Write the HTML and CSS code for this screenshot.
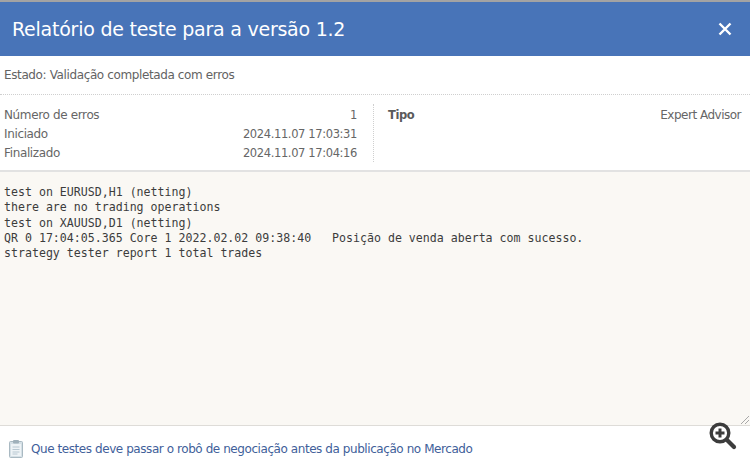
FILE: index.html
```html
<!DOCTYPE html>
<html lang="pt">
<head>
<meta charset="utf-8">
<title>Relatório de teste</title>
<link rel="stylesheet" href="styles.css">
</head>
<body>
<div class="dialog">
  <header class="head">
    <h1 class="title">Relatório de teste para a versão 1.2</h1>
    <svg class="close" width="14" height="14" viewBox="0 0 14 14" aria-hidden="true"><path d="M1.5 1.5 12.5 12.5M12.5 1.5 1.5 12.5" stroke="#fff" stroke-width="2.4" fill="none"/></svg>
  </header>
  <div class="status">Estado: Validação completada com erros</div>
  <div class="info">
    <div class="col col-left">
      <div class="row"><span>Número de erros</span><span class="val">1</span></div>
      <div class="row"><span>Iniciado</span><span class="val">2024.11.07 17:03:31</span></div>
      <div class="row"><span>Finalizado</span><span class="val">2024.11.07 17:04:16</span></div>
    </div>
    <div class="col col-right">
      <div class="row"><b class="strong">Tipo</b><span class="type">Expert Advisor</span></div>
    </div>
  </div>
  <div class="log-wrap">
    <pre class="log">test on EURUSD,H1 (netting)
there are no trading operations
test on XAUUSD,D1 (netting)
QR 0 17:04:05.365 Core 1 2022.02.02 09:38:40   Posição de venda aberta com sucesso.
strategy tester report 1 total trades</pre>
    <svg class="grip" width="10" height="10" viewBox="0 0 10 10" aria-hidden="true"><path d="M1 9 9 1M5 9 9 5" stroke="#a8a8a8" stroke-width="1" fill="none"/></svg>
  </div>
  <footer class="foot">
    <svg class="clip" width="16" height="19" viewBox="0 0 16 19" aria-hidden="true">
      <rect x="1.5" y="2.5" width="13" height="16" rx="1" fill="#d5e0e6" stroke="#a9b9c2"/>
      <rect x="3" y="5" width="10" height="12" fill="#eef3f6"/>
      <path d="M4.5 8h7M4.5 10.5h7M4.5 13h7M4.5 15h5" stroke="#b8c8d2" stroke-width="1"/>
      <rect x="5" y="1" width="6" height="3.5" rx="1" fill="#9fb0ba"/>
    </svg>
    <a class="link" href="#">Que testes deve passar o robô de negociação antes da publicação no Mercado</a>
  </footer>
  <svg class="zoom" width="30" height="30" viewBox="0 0 30 30" aria-hidden="true">
    <circle cx="12" cy="12" r="8.8" fill="#fff" stroke="#3c3c3c" stroke-width="3.4"/>
    <path d="M12 7.5v9M7.5 12h9" stroke="#3c3c3c" stroke-width="3"/>
    <path d="M19 19 26 26" stroke="#3c3c3c" stroke-width="4.2" stroke-linecap="round"/>
  </svg>
</div>
</body>
</html>
```
FILE: styles.css
```css
* { box-sizing: border-box; }
html, body { margin: 0; padding: 0; }
body { width: 750px; height: 463px; overflow: hidden; background: #fff; font-family: "DejaVu Sans", sans-serif; }
.dialog { position: relative; width: 750px; height: 463px; display: flex; flex-direction: column; }
.head { height: 56px; flex: none; background: #4874b8; border-top: 2px solid #a3a3a3; display: flex; align-items: center; justify-content: space-between; padding: 0 18px 0 12px; }
.title { margin: 0; font-size: 19px; font-weight: 400; color: #fff; letter-spacing: -0.24px; white-space: nowrap; }
.status { height: 39px; flex: none; border-bottom: 1px dotted #cfcfcf; padding: 0 4px; display: flex; align-items: center; font-size: 12px; letter-spacing: -0.38px; color: #636363; }
.info { height: 77px; flex: none; display: flex; padding-top: 10px; font-size: 12px; letter-spacing: -0.36px; color: #666; border-bottom: 2px solid #e2e2e2; }
.col { height: 58px; margin-top: -1px; padding-top: 1px; display: flex; flex-direction: column; }
.col-left { width: 374px; padding-right: 16px; padding-left: 4px; border-right: 1px dotted #cfcfcf; }
.col-right { flex: 1; padding-right: 9px; padding-left: 14px; }
.row { height: 19.5px; display: flex; align-items: center; justify-content: space-between; }
.val { font-size: 11.5px; letter-spacing: -0.37px; }
.type { letter-spacing: -0.5px; }
.strong { font-size: 11.5px; font-weight: 700; letter-spacing: -0.4px; color: #5a5a5a; }
.log-wrap { position: relative; flex: 1; background: #faf8f4; border-bottom: 1px solid #dedcd8; padding: 13px 4px 0; }
.log { margin: 0; font-family: "DejaVu Sans Mono", monospace; font-size: 11.6px; line-height: 15.3px; color: #3c3c3c; }
.grip { position: absolute; right: 0; bottom: 0; }
.foot { height: 37px; flex: none; display: flex; align-items: center; gap: 7px; padding: 8px 0 0 8px; }
.link { font-size: 12px; letter-spacing: -0.43px; color: #41609a; text-decoration: none; white-space: nowrap; }
.zoom { position: absolute; left: 708px; top: 421px; }
```
